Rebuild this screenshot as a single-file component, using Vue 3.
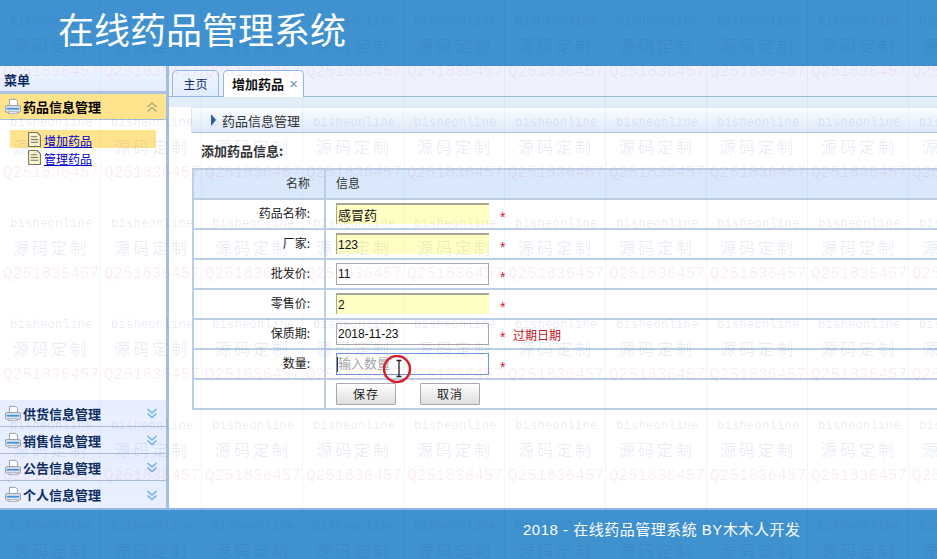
<script setup>
const tiles = Array.from({ length: 60 }, (_, i) => i)
const lower = ['供货信息管理', '销售信息管理', '公告信息管理', '个人信息管理']
const rows = [
  { label: '药品名称:', value: '感冒药', warm: true, wide: true },
  { label: '厂家:', value: '123', warm: true },
  { label: '批发价:', value: '11' },
  { label: '零售价:', value: '2', warm: true },
  { label: '保质期:', value: '2018-11-23', note: '过期日期' }
]
</script>

<template>
  <div class="page">
    <header class="top"><h1>在线药品管理系统</h1></header>

    <div class="middle">
      <aside class="side">
        <div class="menu-title">菜单</div>
        <div class="acc acc-open">
          <svg class="printer" viewBox="0 0 18 18"><path d="M5 1h7l2 2v5H5z" fill="#fff" stroke="#8d97a5"/><path d="M2 8h14q1.500 0 1.500 1.500V14q0 1.500-1.500 1.500H2Q.5 15.500.5 14V9.500Q.5 8 2 8z" fill="#dfe4ea" stroke="#8d97a5"/><path d="M2 10.500h14v2H2z" fill="#3f96e0"/><path d="M4 15h10v2H4z" fill="#fff" stroke="#8d97a5" stroke-width=".8"/></svg>
          <span>药品信息管理</span>
          <svg class="chev" viewBox="0 0 12 12"><path d="M1.500 6 6 2l4.500 4M1.500 10.500 6 6.500l4.500 4" fill="none" stroke="#b4ad7c" stroke-width="1.600"/></svg>
        </div>
        <div class="tree">
          <div class="leaf leaf-on">
            <svg class="doc" viewBox="0 0 12 14"><path d="M.5.5h8l3 3v10H.5z" fill="#fbf5cf" stroke="#77745f"/><path d="M2.500 4.500h6M2.500 7h7M2.500 9.500h7" stroke="#77745f"/></svg>
            <a href="#">增加药品</a>
          </div>
          <div class="leaf">
            <svg class="doc" viewBox="0 0 12 14"><path d="M.5.5h8l3 3v10H.5z" fill="#fbf5cf" stroke="#77745f"/><path d="M2.500 4.500h6M2.500 7h7M2.500 9.500h7" stroke="#77745f"/></svg>
            <a href="#">管理药品</a>
          </div>
        </div>
        <div v-for="name in lower" :key="name" class="acc">
          <svg class="printer" viewBox="0 0 18 18"><path d="M5 1h7l2 2v5H5z" fill="#fff" stroke="#8d97a5"/><path d="M2 8h14q1.500 0 1.500 1.500V14q0 1.500-1.500 1.500H2Q.5 15.500.5 14V9.500Q.5 8 2 8z" fill="#dfe4ea" stroke="#8d97a5"/><path d="M2 10.500h14v2H2z" fill="#3f96e0"/><path d="M4 15h10v2H4z" fill="#fff" stroke="#8d97a5" stroke-width=".8"/></svg>
          <span>{{ name }}</span>
          <svg class="chev" viewBox="0 0 12 12"><path d="M1.500 2 6 6l4.500-4M1.500 6.500l4.500 4 4.500-4" fill="none" stroke="#6fb0e8" stroke-width="1.600"/></svg>
        </div>
      </aside>

      <main class="main">
        <nav class="tabs">
          <div class="tab">主页</div>
          <div class="tab tab-on"><b>增加药品</b><span class="close">×</span></div>
        </nav>
        <div class="band"></div>
        <div class="crumb"><i class="tri"></i><span>药品信息管理</span></div>
        <div class="form-title">添加药品信息:</div>

        <div class="sheet">
          <div class="line line-head">
            <div class="key">名称</div>
            <div class="val val-head">信息</div>
          </div>
          <div v-for="r in rows" :key="r.label" class="line">
            <div class="key">{{ r.label }}</div>
            <div class="val">
              <input class="field" :class="{ warm: r.warm, wide: r.wide }" :value="r.value" readonly>
              <span class="star">*</span>
              <span v-if="r.note" class="note">{{ r.note }}</span>
            </div>
          </div>
          <div class="line">
            <div class="key">数量:</div>
            <div class="val val-focus">
              <div class="field focus"><i class="caret"></i>输入数量</div>
              <span class="star">*</span>
              <div class="cursor">
                <svg viewBox="0 0 30 30" width="30" height="30"><circle cx="14" cy="14" r="13" fill="none" stroke="#d4212d" stroke-width="2.500"/><path d="M13.500 5.500h5M16 5.500v16M13.500 21.500h5" fill="none" stroke="#222" stroke-width="1.300"/></svg>
              </div>
            </div>
          </div>
          <div class="line line-last">
            <div class="key"></div>
            <div class="val val-btn">
              <button type="button">保存</button>
              <button type="button">取消</button>
            </div>
          </div>
        </div>
      </main>
    </div>

    <footer class="bottom"><span>2018 - 在线药品管理系统 BY木木人开发</span></footer>

    <div class="marks">
      <div v-for="t in tiles" :key="t" class="mark">
        <span class="m1">bisheonline</span>
        <span class="m2">源码定制</span>
        <span class="m3">Q251836457</span>
      </div>
    </div>
  </div>
</template>

<style>
html, body { margin: 0; overflow: hidden; background: #fff; }
</style>

<style scoped>
.page {
  position: relative;
  width: 937px;
  height: 559px;
  overflow: hidden;
  display: flex;
  flex-direction: column;
  font-family: "Noto Sans CJK SC", "Liberation Sans", sans-serif;
  font-size: 12px;
  color: #222;
  background: #fff;
}
.top {
  height: 66px;
  flex: none;
  background: #3f92cf;
  padding-left: 58px;
  box-sizing: border-box;
}
.top h1 {
  margin: 0;
  font-size: 36px;
  font-weight: 400;
  line-height: 56px;
  color: #fff;
}
.middle { flex: 1; display: flex; min-height: 0; }
.side {
  width: 166px;
  flex: none;
  display: flex;
  flex-direction: column;
  border-right: 3px solid #a3bfe6;
  background: #fff;
}
.menu-title {
  height: 28px;
  box-sizing: border-box;
  border-bottom: 3px solid #a9c4e4;
  background: linear-gradient(#eff5ff, #e4edff);
  padding-left: 4px;
  font-size: 13px;
  font-weight: 700;
  line-height: 27px;
  color: #0e2d5f;
}
.acc {
  height: 27px;
  flex: none;
  box-sizing: border-box;
  display: flex;
  align-items: center;
  padding: 0 8px 0 5px;
  border-bottom: 1px solid #a9bcd8;
  background: linear-gradient(#e6eeff, #eaf0ff);
  font-size: 13px;
  font-weight: 700;
  color: #0e2d5f;
}
.acc:last-child { border-bottom: 0; }
.acc-open {
  height: 26px;
  background: #ffe48d;
  color: #000;
}
.acc span { margin-left: 2px; flex: 1; }
.printer { width: 16px; height: 17px; }
.chev { width: 12px; height: 12px; }
.tree { flex: 1; padding-top: 10px; background: #fff; }
.leaf {
  height: 18px;
  margin-left: 10px;
  width: 146px;
  padding-left: 18px;
  box-sizing: border-box;
  display: flex;
  align-items: center;
}
.leaf-on { background: #ffe48d; }
.leaf + .leaf { height: 19px; }
.doc { width: 13px; height: 15px; margin-right: 3px; }
.leaf a { color: #0000cc; font-size: 12px; text-decoration: underline; padding-top: 2px; }

.main { flex: 1; min-width: 0; overflow: hidden; background: #fff; }
.tabs {
  height: 31px;
  box-sizing: border-box;
  display: flex;
  align-items: flex-end;
  gap: 4px;
  padding-left: 3px;
  background: #eef2ff;
  border-bottom: 1px solid #9dbbd0;
}
.tab {
  width: 47px;
  height: 27px;
  box-sizing: border-box;
  margin-bottom: -1px;
  border: 1px solid #95b8e7;
  border-radius: 5px 5px 0 0;
  background: linear-gradient(#eff5ff, #e0ecff);
  text-align: center;
  line-height: 26px;
  color: #0e2d5f;
}
.tab-on {
  width: 81px;
  border-bottom: 0;
  background: #fff;
  padding-left: 3px;
  white-space: nowrap;
  font-size: 13px;
  color: #111;
}
.close { margin-left: 5px; color: #6a8fb5; font-size: 15px; font-family: "Liberation Sans", sans-serif; }
.band { height: 10px; background: #e3eefb; }
.crumb {
  margin-left: 22px;
  height: 26px;
  box-sizing: border-box;
  display: flex;
  align-items: center;
  padding-left: 19px;
  background: linear-gradient(#fbfdff, #dde9f9);
  border: 1px solid #dbe5f3;
  border-bottom-color: #b9c8df;
  border-right: 0;
  font-size: 13px;
  color: #333;
}
.tri {
  width: 0;
  height: 0;
  border-left: 5px solid #2b5fa5;
  border-top: 6px solid transparent;
  border-bottom: 6px solid transparent;
  margin-right: 6px;
}
.form-title {
  height: 35px;
  margin-left: 32px;
  font-size: 13px;
  font-weight: 700;
  line-height: 35px;
  color: #333;
}
.sheet {
  margin-left: 23px;
  border-left: 2px solid #bccde6;
  border-top: 2px solid #bccde6;
}
.line {
  height: 30px;
  box-sizing: border-box;
  display: grid;
  grid-template-columns: 132px 1fr;
  border-bottom: 2px solid #bccde6;
}
.line-head { background: #d9e9fb; }
.key {
  border-right: 2px solid #bccde6;
  text-align: right;
  padding-right: 14px;
  line-height: 26px;
  color: #222;
}
.line-head .key { line-height: 26px; color: #333; }
.val {
  display: flex;
  align-items: flex-start;
  padding: 3px 0 0 10px;
}
.val-head { padding-left: 10px; padding-top: 0; line-height: 26px; color: #333; }
.field {
  width: 153px;
  height: 22px;
  box-sizing: border-box;
  flex: none;
  margin: 0;
  padding: 1px 1px;
  border: 1px solid #a9a9a9;
  border-radius: 0;
  background: transparent;
  outline: 0;
  font: 12px/18px "Liberation Sans", "Noto Sans CJK SC", sans-serif;
  color: #111;
}
.wide { font-size: 13px; }
.warm {
  height: 21px;
  background: #ffffc4;
  border-width: 2px 0 0 1px;
  border-color: #aaa595;
}
.focus {
  border-color: #7396dc;
  color: #a5a5a5;
  font-size: 13px;
  display: flex;
  align-items: center;
  padding-left: 0;
}
.caret { width: 1px; height: 15px; background: #333; margin-right: 0; }
.star { margin: 6px 0 0 11px; color: #d8192a; font: 14px/16px "Liberation Sans", sans-serif; width: 9px; }
.note { margin: 1px 0 0 4px; color: #c8101c; line-height: 22px; }
.val-focus { position: relative; }
.cursor { position: absolute; left: 57px; top: 5px; width: 30px; height: 30px; z-index: 2; }
.line-last { height: 30px; }
.val-btn { gap: 24px; }
button {
  width: 60px;
  height: 22px;
  box-sizing: border-box;
  padding: 0;
  border: 1px solid #a9a9a9;
  border-radius: 1px;
  background: linear-gradient(#ffffff, #dedede);
  font: 12px/20px "Noto Sans CJK SC", sans-serif;
  letter-spacing: 1px;
  color: #222;
}
.bottom {
  height: 51px;
  flex: none;
  box-sizing: border-box;
  border-top: 2px solid #8fb8e8;
  background: #4092cf;
  padding-left: 523px;
  font: 15px/38px "Noto Sans CJK SC", "Liberation Sans", sans-serif;
  color: #fff;
}
.bottom span { font-family: "Liberation Sans", "Noto Sans CJK SC", sans-serif; letter-spacing: .5px; }

.marks {
  position: absolute;
  inset: 0;
  z-index: 5;
  pointer-events: none;
  display: grid;
  grid-template-columns: repeat(10, 101px);
  grid-auto-rows: 101px;
}
.mark {
  box-sizing: border-box;
  display: flex;
  flex-direction: column;
  border-right: 1px solid rgba(20, 60, 120, .05);
  overflow: hidden;
  white-space: nowrap;
}
.m1 {
  margin: 14px 0 0 10px;
  height: 16px;
  font: 12px/16px "Liberation Mono", monospace;
  letter-spacing: .3px;
  color: rgba(10, 60, 150, .11);
}
.m2 {
  margin: 5px 0 0 13px;
  height: 20px;
  font-size: 16px;
  line-height: 20px;
  letter-spacing: 3px;
  color: rgba(10, 60, 150, .1);
}
.m3 {
  margin: 7px 0 0 3px;
  height: 20px;
  font: 16px/20px "Liberation Mono", monospace;
  color: rgba(220, 40, 90, .09);
}
</style>
